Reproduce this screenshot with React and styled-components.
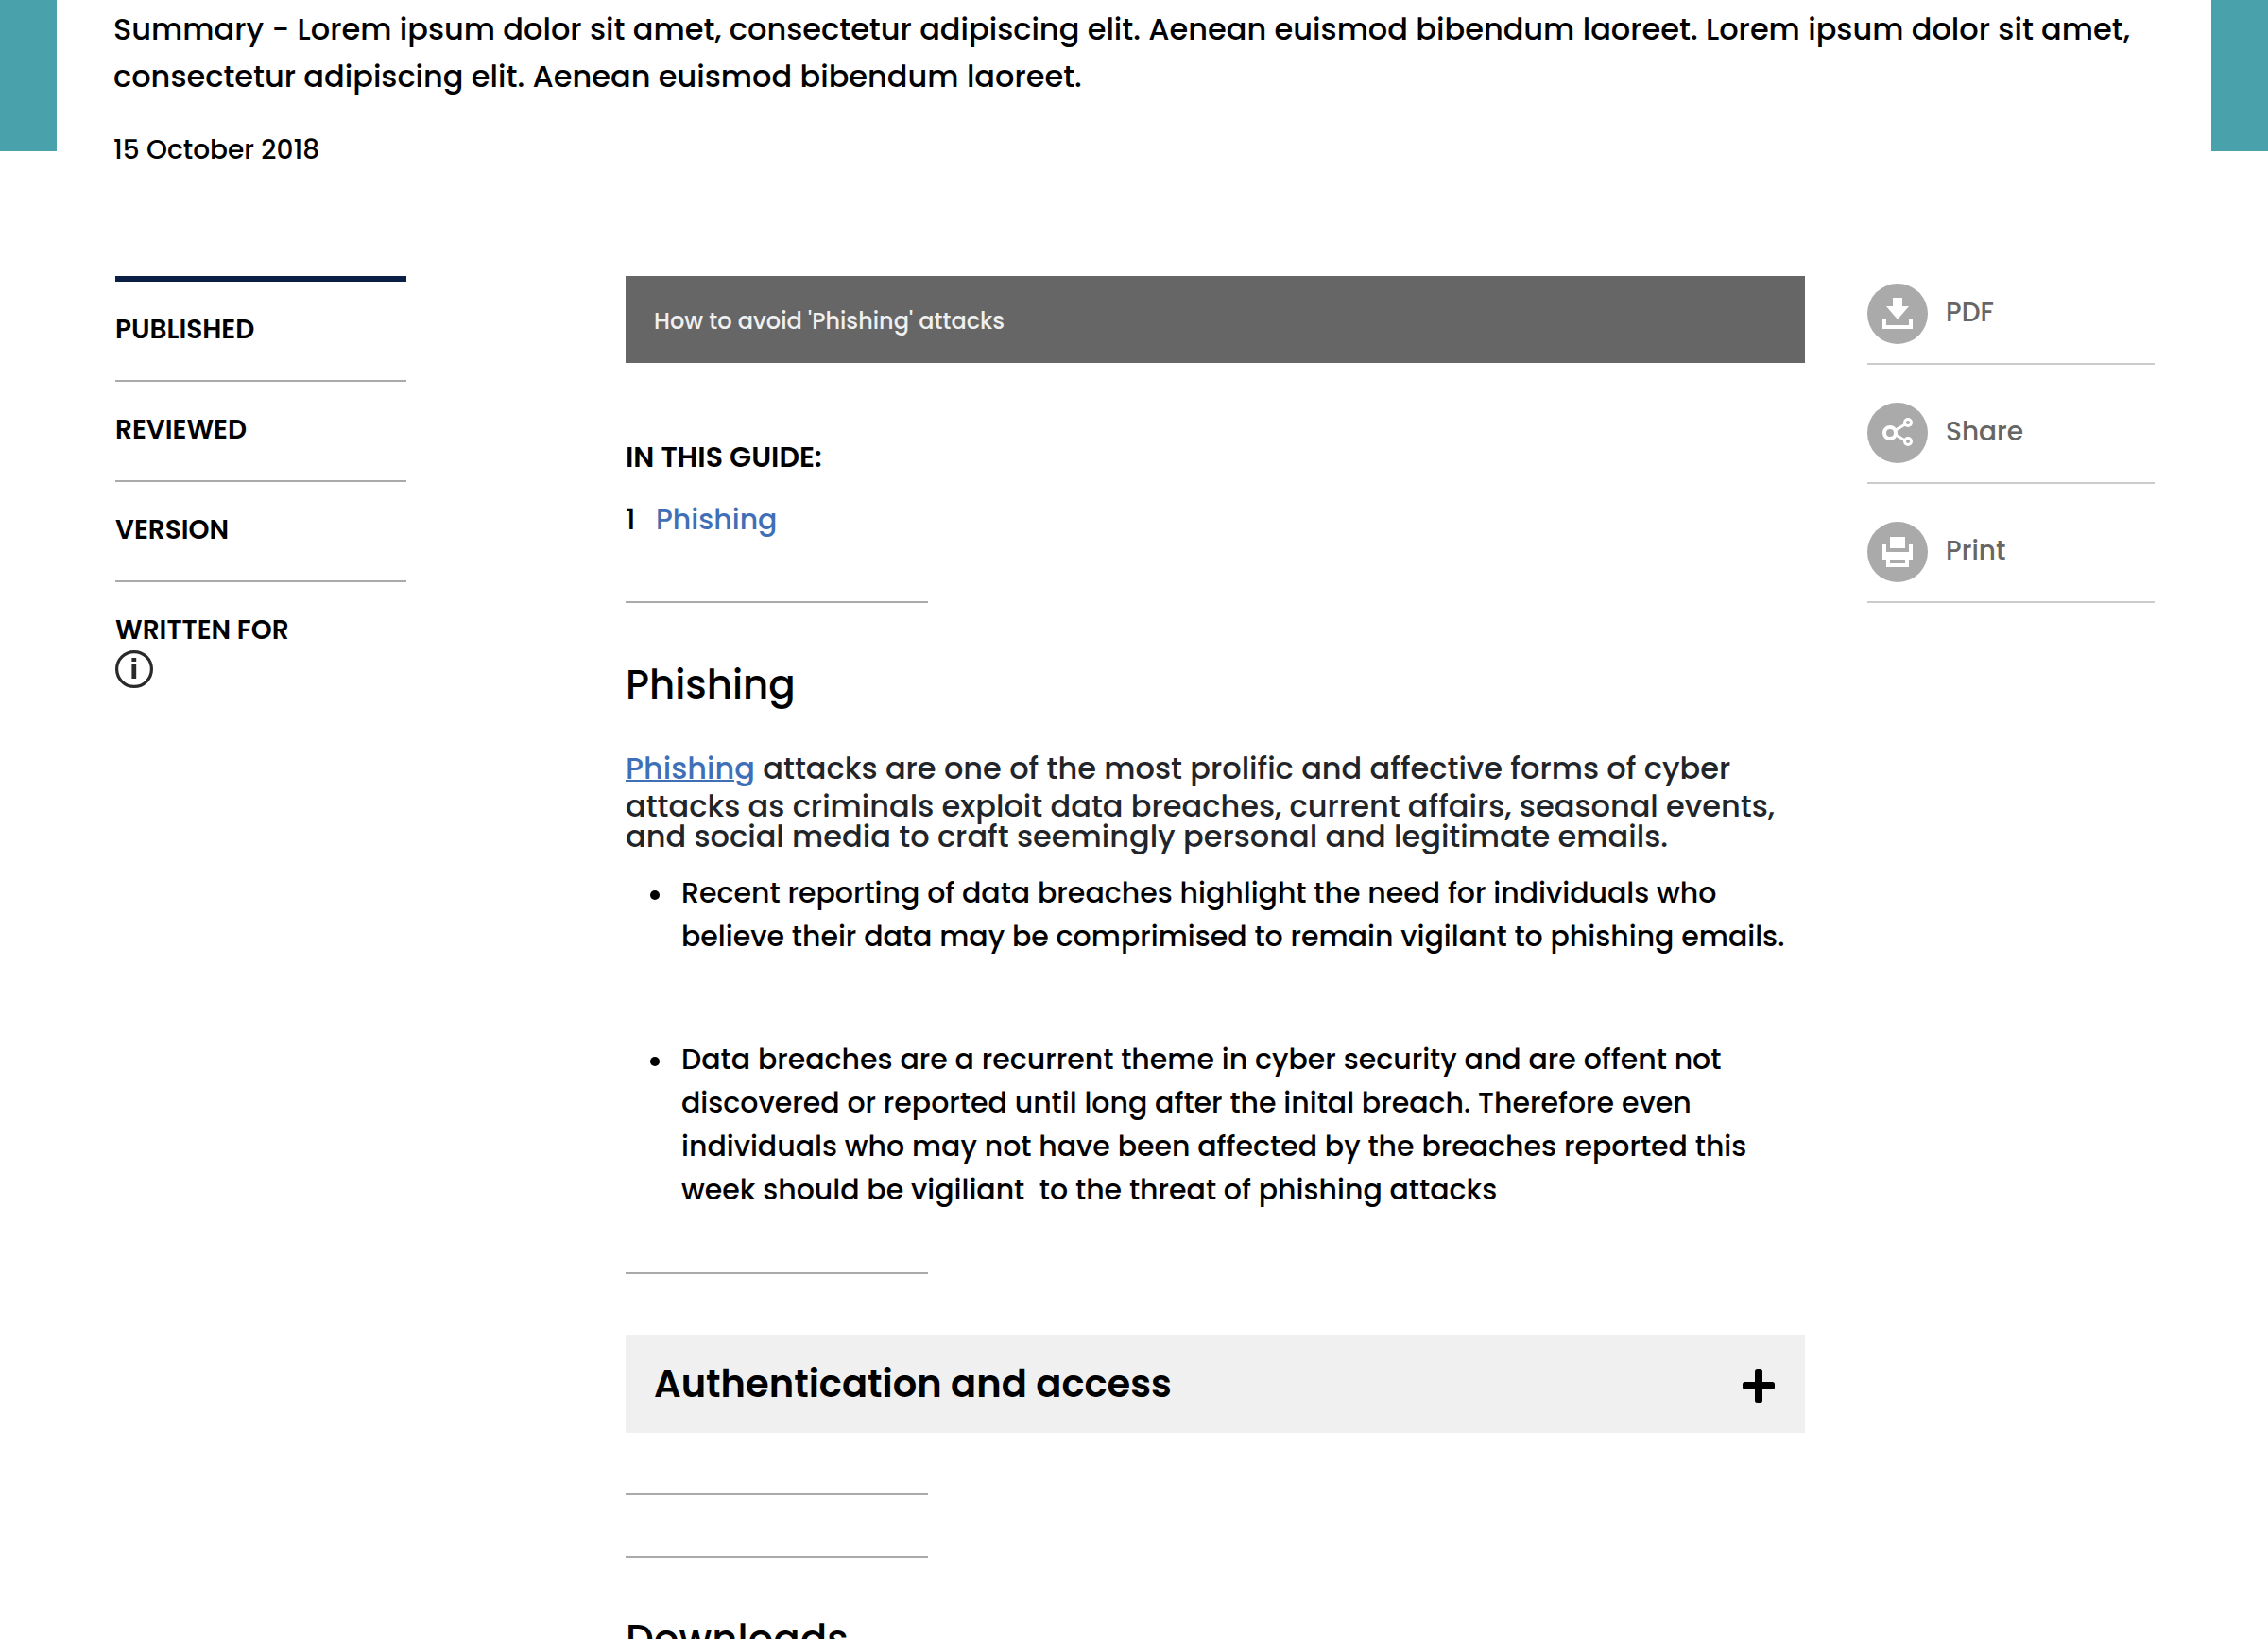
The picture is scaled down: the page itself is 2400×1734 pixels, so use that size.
import React from "react";
import styled, { createGlobalStyle } from "styled-components";

const GlobalStyle = createGlobalStyle`
  *, *::before, *::after { box-sizing: border-box; }
  body {
    margin: 0;
    background: #fff;
    color: #000;
    font-family: Poppins, Inter, "Open Sans", sans-serif;
    font-feature-settings: "cv11";
    font-weight: 500;
  }
  h1, h2, p, ul, ol, dl, dd { margin: 0; padding: 0; }
`;

const Page = styled.div`
  height: 100vh;
  overflow-y: auto;
  scrollbar-width: none;
  background: linear-gradient(#48a1ab, #48a1ab) top / 100% 160px no-repeat;
`;

const Sheet = styled.div`
  margin: 0 60px;
  padding: 6px 60px 0;
  background: #fff;
`;

const Summary = styled.p`
  font-size: 32px;
  line-height: 50px;
`;

const PostDate = styled.time`
  display: block;
  margin-top: 36px;
  font-size: 28px;
  line-height: 34px;
`;

const Columns = styled.div`
  display: grid;
  grid-template-columns: 308px minmax(0, 1fr) 304px;
  column-gap: 66px;
  align-items: start;
  margin-top: 116px;
  padding-left: 2px;
`;

const Facts = styled.dl`
  border-top: 6px solid #0a1e46;
`;

const Fact = styled.div`
  padding: 34px 0 36px;
  border-bottom: 2px solid #aaa;

  &:last-child { border-bottom: 0; }
`;

const FactName = styled.dt`
  font-size: 28px;
  font-weight: 600;
  line-height: 34px;
`;

const FactValue = styled.dd`
  padding-top: 4px;
`;

const InfoButton = styled.button`
  display: block;
  padding: 0;
  border: 0;
  background: none;
  cursor: pointer;

  svg { display: block; }
`;

const Article = styled.main`
  padding-left: 166px;
`;

const TitleBar = styled.h1`
  padding: 32px 30px 28px;
  background: #666;
  color: #f0f0f0;
  font-size: 24px;
  font-weight: 500;
  line-height: 32px;
`;

const GuideLabel = styled.h2`
  margin-top: 83px;
  font-size: 30px;
  font-weight: 600;
  line-height: 34px;
`;

const Contents = styled.ol`
  margin-top: 27px;
  list-style: none;
  font-size: 30px;
  line-height: 44px;
`;

const ContentsItem = styled.li`
  display: grid;
  grid-template-columns: 32px 1fr;
`;

const TextLink = styled.a`
  color: #3f70b7;
  text-decoration: none;
`;

const LeadLink = styled(TextLink)`
  line-height: 48px;
  text-decoration: underline;
  text-decoration-thickness: 2px;
`;

const Divider = styled.hr`
  width: 320px;
  height: 2px;
  margin: 64px 0;
  border: 0;
  background: #aaa;
`;

const SectionTitle = styled.h2`
  font-size: 42px;
  font-weight: 500;
  line-height: 46px;
`;

const Lead = styled.p`
  margin-top: 41px;
  color: #212529;
  font-size: 32px;
  line-height: 32px;
`;

const Points = styled.ul`
  display: grid;
  row-gap: 84px;
  margin-top: 21px;
  padding-left: 26px;
  list-style: none;
  font-size: 30px;
  line-height: 46px;
`;

const Point = styled.li`
  display: grid;
  grid-template-columns: 33px 1fr;
  white-space: pre-wrap;

  &::before {
    content: "";
    width: 10px;
    height: 10px;
    margin-top: 20px;
    border-radius: 50%;
    background: #000;
  }
`;

const Accordion = styled.button`
  display: flex;
  align-items: center;
  justify-content: space-between;
  width: 100%;
  height: 104px;
  padding: 0 32px 0 30px;
  border: 0;
  background: #f0f0f0;
  color: #000;
  font: inherit;
  font-feature-settings: inherit;
  font-size: 40px;
  font-weight: 600;
  text-align: left;
  cursor: pointer;
`;

const Tools = styled.ul`
  list-style: none;
`;

const ToolItem = styled.li`
  padding: 40px 0 20px;
  border-bottom: 2px solid #ccc;

  &:first-child { padding-top: 8px; }
`;

const Tool = styled.button`
  display: flex;
  align-items: center;
  gap: 19px;
  padding: 0;
  border: 0;
  background: none;
  color: #666;
  font: inherit;
  font-feature-settings: inherit;
  font-size: 28px;
  text-decoration: none;
  cursor: pointer;
`;

const ToolLabel = styled.span`
  padding-bottom: 2px;
`;

const Disc = ({ children }) => (
  <svg width="64" height="64" viewBox="0 0 64 64" fill="#fff" aria-hidden="true">
    <circle cx="32" cy="32" r="32" fill="#aaa" />
    {children}
  </svg>
);

const DownloadIcon = () => (
  <Disc>
    <path d="M27 15h10v9h7L32 38 20 24h7z" />
    <path d="M16 38h4v6h24v-6h4v10H16z" />
  </Disc>
);

const ShareIcon = () => (
  <Disc>
    <g fill="none" stroke="#fff">
      <circle cx="24" cy="32" r="6" strokeWidth="4" />
      <circle cx="43" cy="21" r="3.5" strokeWidth="3" />
      <circle cx="43" cy="41" r="3.5" strokeWidth="3" />
      <path d="M30 29l10-6M30 34l10 6" strokeWidth="3" />
    </g>
  </Disc>
);

const PrintIcon = () => (
  <Disc>
    <path d="M24 16h16v12H24z" />
    <path fillRule="evenodd" d="M16 24h4v8h24v-8h4v16h-4v8H20v-8h-4zM24 40v4h16v-4z" />
  </Disc>
);

const InfoIcon = () => (
  <svg width="40" height="40" viewBox="0 0 40 40" aria-hidden="true">
    <circle cx="20" cy="20" r="18.4" fill="none" stroke="#2a2a2a" strokeWidth="3.2" />
    <path d="M17.4 8h4.8v4h-4.8zM17.4 14.3h4.8V30h-4.8z" fill="#2a2a2a" />
  </svg>
);

const PlusIcon = () => (
  <svg width="34" height="40" viewBox="0 0 34 40" aria-hidden="true">
    <rect x="13" y="4" width="8" height="36" rx="2.5" />
    <rect x="0" y="18" width="34" height="8" rx="2.5" />
  </svg>
);

const facts = ["PUBLISHED", "REVIEWED", "VERSION"];

export default function App() {
  return (
    <Page>
      <GlobalStyle />
      <Sheet>
        <Summary>
          Summary - Lorem ipsum dolor sit amet, consectetur adipiscing elit. Aenean euismod bibendum
          laoreet. Lorem ipsum dolor sit amet, consectetur adipiscing elit. Aenean euismod bibendum
          laoreet.
        </Summary>
        <PostDate dateTime="2018-10-15">15 October 2018</PostDate>

        <Columns>
          <Facts>
            {facts.map((name) => (
              <Fact key={name}>
                <FactName>{name}</FactName>
              </Fact>
            ))}
            <Fact>
              <FactName>WRITTEN FOR</FactName>
              <FactValue>
                <InfoButton type="button" aria-label="Audience information">
                  <InfoIcon />
                </InfoButton>
              </FactValue>
            </Fact>
          </Facts>

          <Article>
            <TitleBar>How to avoid 'Phishing' attacks</TitleBar>
            <GuideLabel>IN THIS GUIDE:</GuideLabel>
            <Contents>
              <ContentsItem>
                <span>1</span>
                <TextLink href="#phishing">Phishing</TextLink>
              </ContentsItem>
            </Contents>
            <Divider />

            <SectionTitle id="phishing">Phishing</SectionTitle>
            <Lead>
              <LeadLink href="#phishing">Phishing</LeadLink> attacks are one of the most prolific and
              affective forms of cyber attacks as criminals exploit data breaches, current affairs,
              seasonal events, and social media to craft seemingly personal and legitimate emails.
            </Lead>
            <Points>
              <Point>
                {"Recent reporting of data breaches highlight the need for individuals who believe their data may be comprimised to remain vigilant to phishing emails."}
              </Point>
              <Point>
                {"Data breaches are a recurrent theme in cyber security and are offent not discovered or reported until long after the inital breach. Therefore even individuals who may not have been affected by the breaches reported this week should be vigiliant  to the threat of phishing attacks"}
              </Point>
            </Points>
            <Divider />

            <Accordion type="button" aria-expanded="false">
              Authentication and access
              <PlusIcon />
            </Accordion>
            <Divider />
            <Divider />

            <SectionTitle>Downloads</SectionTitle>
          </Article>

          <Tools>
            <ToolItem>
              <Tool as="a" href="#pdf">
                <DownloadIcon />
                <ToolLabel>PDF</ToolLabel>
              </Tool>
            </ToolItem>
            <ToolItem>
              <Tool type="button">
                <ShareIcon />
                <ToolLabel>Share</ToolLabel>
              </Tool>
            </ToolItem>
            <ToolItem>
              <Tool type="button">
                <PrintIcon />
                <ToolLabel>Print</ToolLabel>
              </Tool>
            </ToolItem>
          </Tools>
        </Columns>
      </Sheet>
    </Page>
  );
}
